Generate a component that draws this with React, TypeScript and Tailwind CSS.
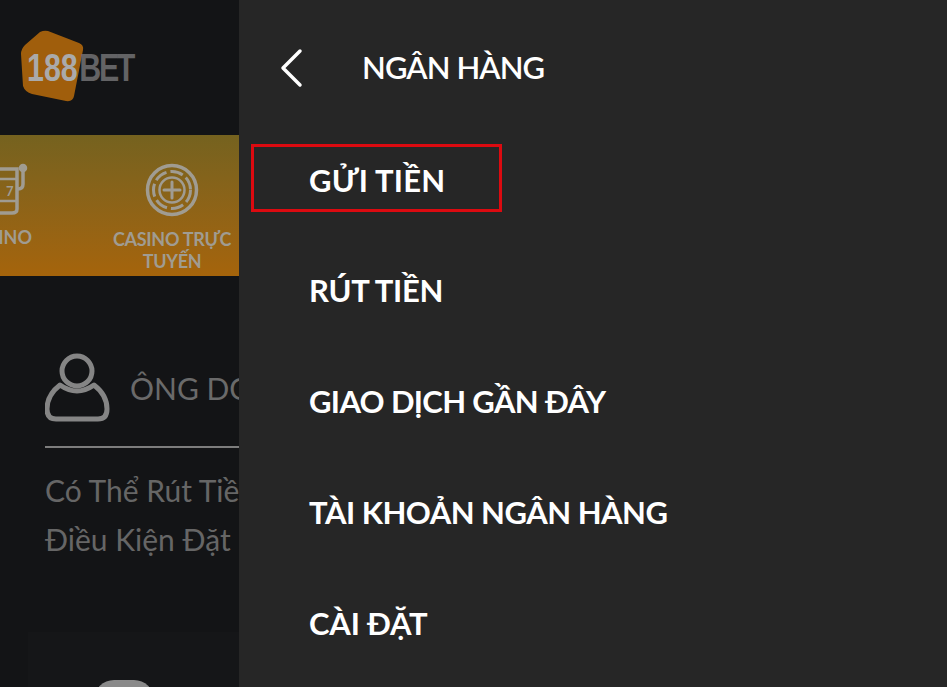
import React from 'react';

const menu = [
  { label: 'RÚT TIỀN', cls: 'tracking-[-0.3px]' },
  { label: 'GIAO DỊCH GẦN ĐÂY', cls: 'tracking-[-0.65px]' },
  { label: 'TÀI KHOẢN NGÂN HÀNG', cls: 'tracking-[-0.5px]' },
  { label: 'CÀI ĐẶT', cls: 'tracking-[-0.2px]' },
];

function Logo() {
  return (
    <div className="relative h-[76px] w-[120px]">
      <svg className="absolute left-0 top-0" width="66" height="76" viewBox="0 0 66 76">
        <path d="M20 2 Q24 0 28 1 L59 13 Q64 15 63 20 L54 66 Q53 72 46 71 L12 64 Q5 62 3 56 L1 24 Q1 19 5 15 Z" fill="#a05e0c" />
      </svg>
      <div className="absolute left-[7px] top-[17px] flex origin-left scale-x-[0.8] font-['Liberation_Sans',sans-serif] text-[38px] font-bold leading-[42px]">
        <span className="text-[#aaaaaa]">188</span>
        <span className="ml-[2px] tracking-[-3px] text-[#636365]">BET</span>
      </div>
    </div>
  );
}

function SlotIcon() {
  return (
    <svg width="36" height="56" viewBox="0 0 36 56" fill="none" stroke="#a09c92" strokeWidth="3.5" strokeLinecap="round">
      <path d="M0 6 H17 V46 Q17 50 12 50 H0" />
      <path d="M0 16 H17 M0 38 H17" strokeWidth="2.5" />
      <text x="6" y="33" fontSize="13" fontWeight="700" fill="#a09c92" stroke="none">7</text>
      <circle cx="23" cy="5" r="2.5" fill="#a09c92" />
      <path d="M23 8 V21 Q23 26 18 26" />
    </svg>
  );
}

function ChipIcon() {
  return (
    <svg width="54" height="54" viewBox="0 0 54 54" fill="none" stroke="#a09c92">
      <circle cx="27" cy="27" r="24.5" strokeWidth="3.5" />
      <circle cx="27" cy="27" r="18.5" strokeWidth="3" strokeDasharray="13 4" />
      <circle cx="27" cy="27" r="12.5" strokeWidth="2.5" />
      <path d="M27 19 V35 M19 27 H35" strokeWidth="3" strokeLinecap="round" />
    </svg>
  );
}

function UserIcon() {
  return (
    <svg className="shrink-0" width="66" height="70" viewBox="0 0 66 70" fill="none" stroke="#858585" strokeWidth="5">
      <circle cx="32" cy="18" r="15" />
      <path d="M15 32 Q32 44 49 32 Q62 42 62 56 Q62 66 53 66 H11 Q2 66 2 56 Q2 42 15 32 Z" strokeLinejoin="round" />
    </svg>
  );
}

export default function App() {
  return (
    <div className="flex h-[687px] w-[947px] overflow-hidden bg-[#131416] font-['Lato','Noto_Sans',sans-serif]">
      <aside className="flex w-[239px] shrink-0 flex-col overflow-hidden">
        <div className="flex h-[135px] shrink-0 items-start pl-[20px] pt-[30px]">
          <Logo />
        </div>

        <div className="flex h-[141px] shrink-0 items-start justify-end bg-gradient-to-b from-[#75621f] to-[#a5640b]">
          <div className="w-[107px] shrink-0 overflow-hidden pt-[28px]">
            <SlotIcon />
            <div className="mt-[7px] -ml-[36px] text-[18px] font-bold leading-[22px] text-[#a09c92]">CASINO</div>
          </div>
          <div className="flex w-[132px] shrink-0 flex-col items-center pr-[2px] pt-[28px]">
            <ChipIcon />
            <div className="mt-[11px] text-center text-[18px] font-bold leading-[22px] tracking-[-0.3px] text-[#a09c92]">
              CASINO TRỰC
              <br />
              TUYẾN
            </div>
          </div>
        </div>

        <div className="ml-[45px] mt-[77px] w-[260px]">
          <div className="flex h-[70px] items-center gap-[19px]">
            <UserIcon />
            <span className="whitespace-nowrap text-[30px] leading-none text-[#6a6a6a]">ÔNG DOANH</span>
          </div>
          <div className="mt-[23px] h-[2px] bg-[#7d7d7d]" />
          <p className="mt-[18px] whitespace-nowrap text-[30px] leading-[49px] text-[#666666]">
            Có Thể Rút Tiền
            <br />
            Điều Kiện Đặt Cược
          </p>
        </div>

        <div className="ml-[28px] mt-[68px] flex flex-1 justify-center bg-[#151618] pr-[20px] pt-[48px]">
          <div className="h-[40px] w-[60px] rounded-full bg-[#8a8a8a]" />
        </div>
      </aside>

      <main className="flex-1 bg-[#262626] text-white">
        <header className="flex h-[135px] items-start pl-[40px] pt-[48px]">
          <svg width="26" height="40" viewBox="0 0 26 40" fill="none" stroke="#ffffff" strokeWidth="3.5" strokeLinecap="round" strokeLinejoin="round">
            <path d="M21 3 L4 20 L21 37" />
          </svg>
          <h1 className="ml-[57px] text-[31px] font-semibold leading-[38px] tracking-[-0.9px]">NGÂN HÀNG</h1>
        </header>

        <nav className="flex flex-col pl-[12px]">
          <a className="mt-[9px] flex h-[68px] w-[251px] items-center border-[3px] border-[#dc0a10] pl-[55px] pt-[4px] text-[31px] font-bold tracking-[0.2px]">
            GỬI TIỀN
          </a>
          {menu.map(item => (
            <a key={item.label} className={`mt-[42.7px] flex h-[68px] items-center pl-[58px] pt-[4px] text-[31px] font-bold ${item.cls}`}>
              {item.label}
            </a>
          ))}
        </nav>
      </main>
    </div>
  );
}
